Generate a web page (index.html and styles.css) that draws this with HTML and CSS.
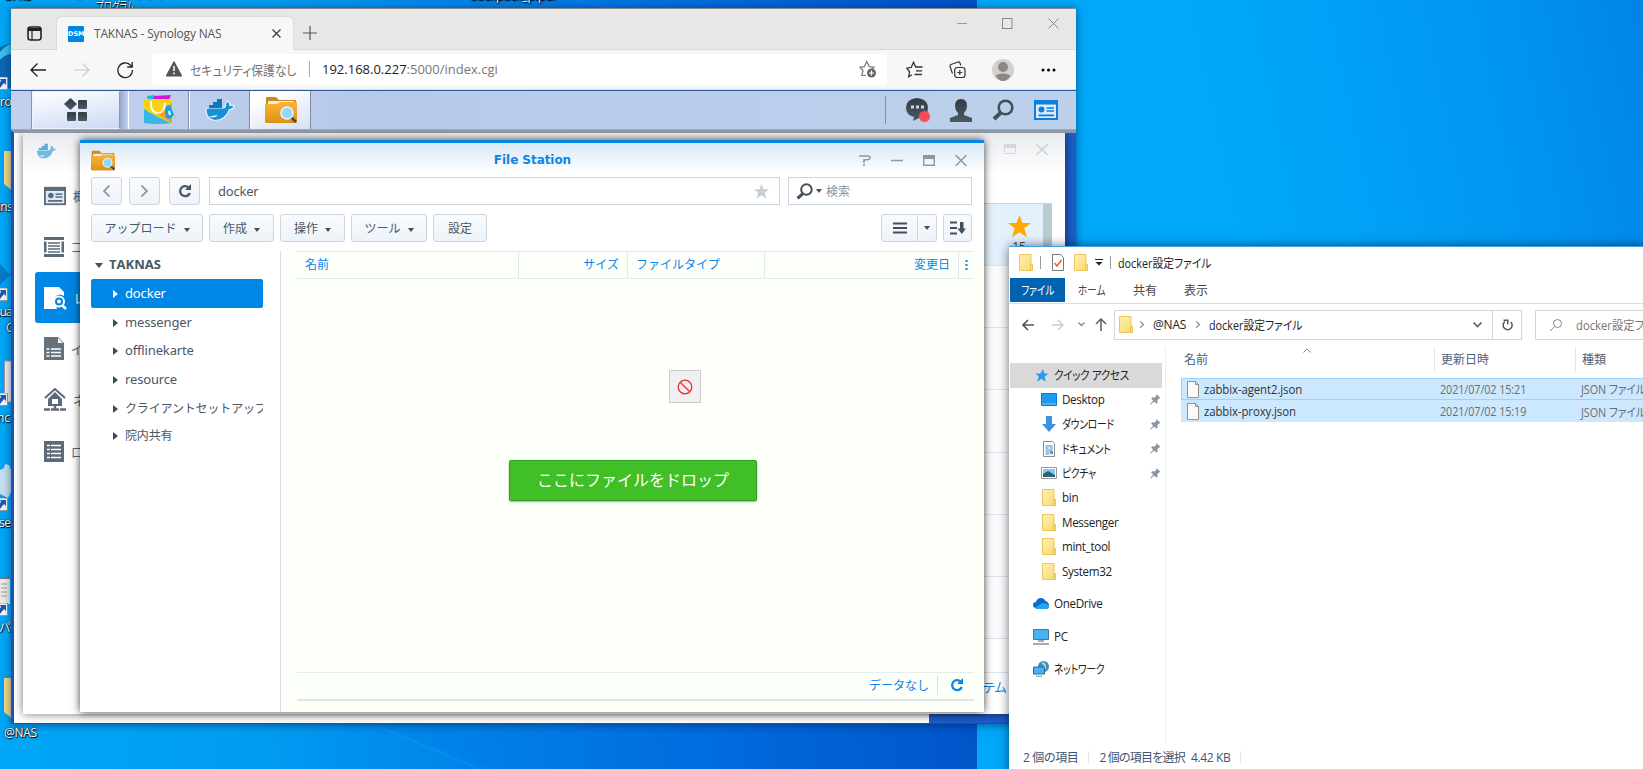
FILE: index.html
```html
<!DOCTYPE html>
<html lang="ja">
<head>
<meta charset="utf-8">
<title>Desktop</title>
<link rel="stylesheet" href="styles.css">
</head>
<body>
<svg class="defs" width="0" height="0">
  <defs>
    <linearGradient id="gFolder" x1="0" y1="0" x2="1" y2="1"><stop offset="0" stop-color="#fff0ae"/><stop offset="1" stop-color="#f8d874"/></linearGradient>
    <linearGradient id="gOrange" x1="0" y1="0" x2="0" y2="1"><stop offset="0" stop-color="#fbb53a"/><stop offset="1" stop-color="#dc9116"/></linearGradient>
    <linearGradient id="gDark" x1="0" y1="0" x2="0" y2="1"><stop offset="0" stop-color="#343c45"/><stop offset="1" stop-color="#4d5964"/></linearGradient>
  </defs>
  <symbol id="folder" viewBox="0 0 14 17"><path d="M.5.5H12V11h1.500v5.500H.5z" fill="url(#gFolder)" stroke="#edc95b"/><path d="M11.500 10.500h2v6h-2z" fill="#fbdf80" stroke="#e6bd44" stroke-width=".8"/></symbol>
  <symbol id="fs" viewBox="0 0 32 28"><path d="M1 2q0-1 1-1h9l3 3h16q1 0 1 1v21q0 1-1 1H2q-1 0-1-1z" fill="#c98a1b"/><path d="M3 5h26v4H3z" fill="#f3efe2"/><path d="M0 8h12l3-2h17v20q0 1-1 1H1q-1 0-1-1z" fill="url(#gOrange)"/><path d="M26 21l5 5" stroke="#3e4d59" stroke-width="2.600"/><circle cx="22" cy="17" r="6" fill="#8fd8fb" stroke="#e6f4fb" stroke-width="1.600"/></symbol>
  <symbol id="whale" viewBox="0 0 30 24"><path d="M.8 11.500q1-1.500 3-1.500h15q2.500-1 1.500-4l2.200-3q2.800 2 2.500 4.500 2-.8 4.300.5-1.300 3.500-4.800 3.500Q20.500 22.500 10 22.500 1.500 21.500.8 11.500z" fill="#1890d8" stroke="#e9f4fc" stroke-width="1.200"/><path d="M4 10V7h4V4h4V1h5v9z" fill="#0e78bd"/><path d="M4 18.500q6 2.500 9-1.500-5 .500-9 1.500z" fill="#e9f4fc"/></symbol>
  <symbol id="lens" viewBox="0 0 22 22"><circle cx="13.500" cy="8.500" r="6.800" fill="none" stroke="currentColor" stroke-width="2.600"/><path d="M8.500 14L2 20" stroke="currentColor" stroke-width="4"/></symbol>
  <symbol id="reload" viewBox="0 0 14 14"><path d="M11.800 9A5 5 0 1 1 10.500 3.500" fill="none" stroke="currentColor" stroke-width="2.300"/><path d="M13 0v6H7z" fill="currentColor"/></symbol>
  <symbol id="pin" viewBox="0 0 11 11"><path d="M6.500 0l4 4-1.500.5-1.600 1.700.1 2.300-1.200 1.200L4.200 7.600.5 10.800 0 10.300l3.200-3.700L1.100 4.500l1.200-1.200 2.300.1L6.200 2z" fill="#8996a3"/></symbol>
  <symbol id="shortcut" viewBox="0 0 11 13"><path d="M0 0h10.500v12.500H0z" fill="#f7f7f7" stroke="#999"/><path d="M3 2h6v6L7 6 3 11 0 9l4-5z" fill="#1c5bb5"/></symbol>
  <symbol id="doc" viewBox="0 0 12 17"><path d="M.5.5h8l3 3v13H.5z" fill="#fafafa" stroke="#929292"/><path d="M8.500.5v3h3" fill="none" stroke="#929292"/></symbol>
  <symbol id="card" viewBox="0 0 24 20"><path d="M0 0h24v20H0z" fill="currentColor"/><path d="M2 4.500h20V18H2z" class="paper"/><circle cx="7.500" cy="9.500" r="3" fill="currentColor"/><path d="M12.500 8H20M12.500 11H20M4.500 15.300H20" stroke="currentColor" stroke-width="1.700"/></symbol>
</svg>

<div class="desktop">
  <div class="monitor-one"><svg width="977" height="769"><path d="M370 723L500 769H977V723z" fill="#0074df" opacity=".15"/><path d="M370 723l110 46M575 0l40 9" stroke="#4aa6f2" stroke-width="1.500" opacity=".2"/></svg></div>
  <div class="monitor-two"></div>

  <svg class="desk-art" width="40" height="720">
    <circle cx="11" cy="66" r="22" fill="#0c67b5"/><path d="M0 52q6-7 11-8v10q-7 1-11 6z" fill="#36bfe8"/>
    <path d="M4 151h10v41l-10-8zM4 678h10v42l-10-8z" fill="#f1d889"/>
    <path d="M0 264l10 11-10 10z" fill="#0a79c8"/>
    <path d="M4.500 361h9v41h-9z" fill="#eee" stroke="#999"/><path d="M0 470l4-2 1-4 4 1 2 5v22l-3 6-4-2-4-2z" fill="#c4dff0"/>
    <path d="M0 577h10v27H0z" fill="#eceae6"/><path d="M0 578h11" stroke="#777" stroke-width="2"/><path d="M1 584h6m-6 4h6m-6 4h6m-6 4h6" stroke="#999"/>
    <use href="#shortcut" x="-3" y="77" width="11" height="13"/><use href="#shortcut" x="-3" y="288" width="11" height="13"/><use href="#shortcut" x="-3" y="393" width="11" height="13"/><use href="#shortcut" x="-3" y="498" width="11" height="13"/><use href="#shortcut" x="-3" y="603" width="11" height="13"/>
  </svg>
  <span class="dl dl1">ro</span><span class="dl dl2">ins</span><span class="dl dl3">sua</span><span class="dl dl4">C</span><span class="dl dl5">nc</span><span class="dl dl6">se</span><span class="dl dl7">パ</span><span class="dl dl8">@NAS</span>
  <span class="dl dl9">こインストラクティ</span><span class="dl dl10">プログラム</span><span class="dl dl11">backpack_p.pdf</span><span class="dl dl12">3.4.5</span>

  <section class="edge">
    <header class="tabstrip">
      <svg class="tabmenu" width="15" height="15" viewBox="0 0 15 15"><rect x="1" y="1" width="13" height="13" rx="2.500" fill="none" stroke="#222" stroke-width="1.600"/><path d="M1 3.500h13" stroke="#222" stroke-width="3"/><path d="M5 4v10" stroke="#222" stroke-width="1.200"/></svg>
      <div class="tab">
        <span class="dsm">DSM</span><span class="tabname">TAKNAS - Synology NAS</span>
        <svg class="tabx" width="9" height="9" viewBox="0 0 9 9"><path d="M.5.5l8 8m0-8l-8 8" stroke="#444" stroke-width="1.400"/></svg>
      </div>
      <svg class="plus" width="14" height="14"><path d="M7 0v14M0 7h14" stroke="#555" stroke-width="1.200"/></svg>
      <div class="wincontrols">
        <svg width="10" height="11"><path d="M0 5.500h10" stroke="#999"/></svg>
        <svg width="11" height="11"><rect x=".5" y=".5" width="9.500" height="10" fill="none" stroke="#888"/></svg>
        <svg width="11" height="11"><path d="M.5.5l10 10m0-10l-10 10" stroke="#888"/></svg>
      </div>
    </header>
    <div class="toolbar">
      <svg class="nav1" width="16" height="14" viewBox="0 0 16 14"><path d="M7.500.5L1 7l6.500 6.500M1 7h15" fill="none" stroke="#222" stroke-width="1.300"/></svg>
      <svg class="nav2" width="16" height="14" viewBox="0 0 16 14"><path d="M8.500.5L15 7l-6.500 6.500M15 7H0" fill="none" stroke="#ccc" stroke-width="1.200"/></svg>
      <svg class="nav3" width="17" height="18" viewBox="0 0 17 18"><path d="M15.500 9A7.300 7.300 0 1 1 13.300 4L15 5.500M15.200 1v5h-5" fill="none" stroke="#222" stroke-width="1.300"/></svg>
      <div class="url">
        <svg class="warn" width="16" height="16" viewBox="0 0 16 16"><path d="M8 .5L15.800 15H.2z" fill="#555" stroke="#555" stroke-linejoin="round"/><path d="M8 5v5M8 11.500v1.700" stroke="#fff" stroke-width="1.500"/></svg>
        <span class="insecure">セキュリティ保護なし</span><i></i><span class="address"><b>192.168.0.227</b>:5000/index.cgi</span>
        <svg class="favadd" width="18" height="18" viewBox="0 0 18 18"><path d="M7 15.500H2.800L4 10.500.8 7.300l4.500-.6L7.800 1.500l2.500 5.200 4.700.5-2.200 2" fill="none" stroke="#767676" stroke-width="1.200"/><circle cx="12.500" cy="13" r="4.500" fill="#666"/><path d="M12.500 10.500v5M10 13h5" stroke="#fff" stroke-width="1.200"/></svg>
      </div>
      <svg class="fav" width="17" height="17" viewBox="0 0 17 17"><path d="M6 13.700l-3.300 2 .9-4.900L.7 7.200l4.500-.7L7.500 1.300 9.800 6h6.700M10 9.800h6M8.500 13.500h7.500" fill="none" stroke="#333" stroke-width="1.300"/></svg>
      <svg class="coll" width="17" height="18" viewBox="0 0 17 18"><rect x="5.700" y="6.500" width="10.300" height="10" rx="2.500" fill="none" stroke="#333" stroke-width="1.200"/><path d="M10.800 9v5M8.300 11.500h5M3.500 12.500L1 5.500Q.7 4 2 3.500L9 1q1.500-.3 2 1l.8 2.500" fill="none" stroke="#333" stroke-width="1.200"/></svg>
      <svg class="avatar" width="22" height="22" viewBox="0 0 22 22"><circle cx="11" cy="11" r="11" fill="#d3d0cd"/><circle cx="11" cy="8" r="5" fill="#8b8784"/><path d="M3.500 17q2-2.500 7.500-2.500t7.500 2.500Q15 22 11 22t-7.500-5z" fill="#8b8784"/></svg>
      <svg class="dots" width="15" height="4"><circle cx="2" cy="2" r="1.500"/><circle cx="7.500" cy="2" r="1.500"/><circle cx="13" cy="2" r="1.500"/></svg>
    </div>

    <nav class="dsmbar">
      <div class="gap1"></div>
      <div class="mainmenu"><svg width="24" height="24" viewBox="0 0 24 24" fill="url(#gDark)"><path d="M6.500 0L13 6 6.500 12 0 6z"/><rect x="14" y="2" width="9" height="9" rx="1"/><rect x="3" y="14" width="9" height="9" rx="1"/><rect x="14" y="14" width="9" height="9" rx="1"/></svg></div>
      <div class="gap2"></div>
      <div class="task"><svg width="32" height="32" viewBox="0 0 32 32"><path d="M10 2l18-1-2 5H8z" fill="#d716d5"/><path d="M4 2l8-1-3 6H5z" fill="#16bce0"/><path d="M1 5h28v24q-14 2-28 0z" fill="#f8cf19"/><path d="M1 15q9 6 27 14-13 2-27 0z" fill="#39b6e9"/><path d="M14 20l15-11v20z" fill="#f7a01b"/><path d="M8 7q-1 11 6 12t8-10" fill="none" stroke="#fffae0" stroke-width="2"/><path d="M23 12l4-1 4 10-4 4-4-1-1-6z" fill="#16a3df"/><path d="M26 17l1 4" stroke="#fff" stroke-width="2"/></svg></div>
      <div class="task"><svg width="30" height="24"><use href="#whale"/></svg></div>
      <div class="task active"><svg width="32" height="28"><use href="#fs"/></svg></div>
      <div class="tray">
        <svg width="24" height="25" viewBox="0 0 24 25"><path d="M11 0q11 1 11 10 0 8-9 10l-6 3 1-4Q0 17 0 10 0 1 11 0z" fill="url(#gDark)"/><path d="M5 9h3M10 9h3M15 9h3" stroke="#c9d6ef" stroke-width="3"/><circle cx="18.500" cy="18.500" r="5.500" fill="#fb4b4f"/></svg>
        <svg width="22" height="23" viewBox="0 0 22 23"><path d="M11 0q6 0 6 7 0 4-3 7v2l8 3v4H0v-4l8-3v-2Q5 11 5 7q0-7 6-7z" fill="url(#gDark)"/></svg>
        <svg class="dk" width="22" height="22"><use href="#lens"/></svg>
        <svg class="blue" width="24" height="20"><use href="#card"/></svg>
      </div>
    </nav>

    <div class="page">
      <div class="docker">
        <aside class="dockernav">
          <svg class="dwhale" width="21" height="17"><use href="#whale"/></svg>
          <div class="ditem"><svg width="22" height="20"><use href="#card"/></svg><span>概要</span></div>
          <div class="ditem"><svg width="20" height="20" viewBox="0 0 20 20"><path d="M0 0h20v3H0zM0 17h20v3H0zM0 4.500h2.500v11H0zM17.500 4.500H20v11h-2.500z" fill="#5d6b78"/><path d="M4 6h12M4 9h12M4 12h12M4 15h12" stroke="#5d6b78" stroke-width="1.500"/></svg><span>コ</span></div>
          <div class="ditem on"><svg width="23" height="24" viewBox="0 0 23 24"><path d="M0 1h15l5 5v4q-4-3-8 0-4 5 0 10l1 3H0z" fill="#fff"/><circle cx="15" cy="15.500" r="5" fill="#0086e5" stroke="#fff" stroke-width="2"/><circle cx="15" cy="15.500" r="2" fill="#fff"/><path d="M18 19l4 4" stroke="#fff" stroke-width="2.500"/></svg><span>レ</span></div>
          <div class="ditem"><svg width="20" height="23" viewBox="0 0 20 23"><path d="M0 0h14l6 6v17H0z" fill="#65727e"/><path d="M14 1v5h5z" fill="#fff"/><path d="M2.500 12h3m1.500 0h10M2.500 15.500h3m1.500 0h10M2.500 19h3m1.500 0h10" stroke="#fff" stroke-width="1.700"/></svg><span>イ</span></div>
          <div class="ditem"><svg width="22" height="23" viewBox="0 0 22 23"><path d="M1 10L11 1l10 9" fill="none" stroke="#5d6b78" stroke-width="2"/><path d="M11 4l7 7v7H4v-7z" fill="#5d6b78"/><path d="M8 11h6v5H8z" fill="#fff"/><path d="M11 18v3M0 21.500h6m1 0h8m1 0h6" stroke="#5d6b78" stroke-width="2.500"/></svg><span>ネ</span></div>
          <div class="ditem"><svg width="20" height="21" viewBox="0 0 20 21"><path d="M0 0h20v21H0z" fill="#5d6b78"/><path d="M3 4.500h3m1 0h10M3 8.500h3m1 0h10M3 12.500h3m1 0h10M3 16.500h3m1 0h10" stroke="#fff" stroke-width="1.700"/></svg><span>ロ</span></div>
        </aside>
        <div class="dockerlist">
          <div class="dctl"><svg width="12" height="10"><path d="M.5.500h11v9H.5z" fill="none" stroke="#d5d9dd"/><path d="M0 2h12" stroke="#d5d9dd" stroke-width="4"/></svg><svg width="12" height="11"><path d="M0 0l12 11M12 0L0 11" stroke="#cdd2d6" stroke-width="1.500"/></svg></div>
          <div class="drow first"><div class="starcol"><svg width="23" height="23" viewBox="0 0 23 23"><path d="M11.500 0l3 8H23l-6.700 5.300L19 22.500l-7.500-5.300L4 22.500l2.700-9.200L0 8h8.500z" fill="#ffa800"/></svg><span>15</span></div><div class="scroll"></div></div>
          <div class="drow"></div><div class="drow"></div><div class="drow"></div><div class="drow"></div><div class="drow"></div><div class="drow"></div><div class="drow short"></div>
          <div class="dfoot">テム</div>
        </div>
      </div>

      <section class="station">
        <header class="stitle"><svg width="24" height="21"><use href="#fs"/></svg><h1>File Station</h1>
          <div class="sctl">
            <svg width="12" height="11" viewBox="0 0 12 11"><path d="M0 1h9.500q1.500 0 1.500 1.500T9.500 4.500L5 5v3M5 9v2" fill="none" stroke="#8d98a3" stroke-width="1.600"/></svg>
            <svg width="12" height="11"><path d="M0 5.500h12" stroke="#8d98a3" stroke-width="1.500"/></svg>
            <svg width="12" height="11"><path d="M.7.700h10.600v9.600H.7z" fill="none" stroke="#8d98a3" stroke-width="1.400"/><path d="M0 2h12" stroke="#8d98a3" stroke-width="4"/></svg>
            <svg width="12" height="11"><path d="M.5 0l11 11M11.500 0L.5 11" stroke="#8d98a3" stroke-width="1.500"/></svg>
          </div>
        </header>
        <div class="srow path">
          <button class="sb"><svg width="7" height="12"><path d="M6.500.5L1 6l5.500 5.500" fill="none" stroke="#8c98a5" stroke-width="1.800"/></svg></button>
          <button class="sb"><svg width="7" height="12"><path d="M.5.500L6 6 .5 11.500" fill="none" stroke="#8c98a5" stroke-width="1.800"/></svg></button>
          <button class="sb rl"><svg width="14" height="14"><use href="#reload"/></svg></button>
          <div class="pathbox"><span>docker</span><svg width="15" height="15" viewBox="0 0 23 23"><path d="M11.500 0l3 8H23l-6.700 5.300L19 22.500l-7.500-5.300L4 22.500l2.700-9.200L0 8h8.500z" fill="#c4cfda"/></svg></div>
          <div class="sfind"><svg class="dk" width="17" height="17"><use href="#lens"/></svg><i class="caret"></i><span>検索</span></div>
        </div>
        <div class="srow actions">
          <button class="sb w1"><span>アップロード</span><i class="caret"></i></button>
          <button class="sb w2"><span>作成</span><i class="caret"></i></button>
          <button class="sb w2"><span>操作</span><i class="caret"></i></button>
          <button class="sb w3"><span>ツール</span><i class="caret"></i></button>
          <button class="sb w4"><span>設定</span></button>
          <div class="viewgrp"><button><svg width="14" height="12"><path d="M0 1.500h14M0 6h14M0 10.500h14" stroke="#444f5a" stroke-width="2"/></svg></button><button><i class="caret"></i></button></div>
          <button class="sb w5"><svg width="16" height="14" viewBox="0 0 16 14"><path d="M0 1.500h7M0 7h7M0 12.500h7" stroke="#444f5a" stroke-width="2.200"/><path d="M10 1h3.500v6.500H16L11.800 13 7.500 7.500H10z" fill="#444f5a"/></svg></button>
        </div>
        <div class="sbody">
          <aside class="tree">
            <div class="root"><i class="caret"></i>TAKNAS</div>
            <div class="node sel"><i></i>docker</div><div class="node"><i></i>messenger</div><div class="node"><i></i>offlinekarte</div><div class="node"><i></i>resource</div><div class="node"><i></i><span class="cs">クライアントセットアップ</span></div><div class="node"><i></i>院内共有</div>
          </aside>
          <main class="grid">
            <div class="ghead"><span>名前</span><span class="r">サイズ</span><span>ファイルタイプ</span><span class="r">変更日</span><span class="more"><svg width="3" height="10"><path d="M1.500 0v2m0 2v2m0 2v2" stroke="#0086e5" stroke-width="2"/></svg></span></div>
            <div class="gempty"></div>
            <div class="gfoot"><span>データなし</span><i></i><svg width="14" height="14"><use href="#reload"/></svg></div>
          </main>
        </div>
        <div class="nodrop"><svg width="16" height="16"><circle cx="8" cy="8" r="6.800" fill="none" stroke="#ee2d37" stroke-width="1.300"/><path d="M3.200 3.200l9.600 9.600" stroke="#ee2d37" stroke-width="1.300"/></svg></div>
        <div class="drop">ここにファイルをドロップ</div>
      </section>
    </div>
  </section>

  <section class="explorer">
    <header class="xtitle"><svg width="14" height="17"><use href="#folder"/></svg><i></i><svg width="12" height="17" viewBox="0 0 12 17"><path d="M.5.500h8l3 3v13H.5z" fill="#fff" stroke="#777"/><path d="M2.500 9l2.500 3 4.500-6" fill="none" stroke="#f0642b" stroke-width="1.600"/></svg><svg width="14" height="17"><use href="#folder"/></svg><svg class="qa" width="8" height="7"><path d="M0 .5h8" stroke="#222"/><path d="M.5 3h7L4 6.500z" fill="#222"/></svg><i></i><span class="xname">docker設定ファイル</span></header>
    <nav class="ribbon"><b><u>ファイル</u></b><span><u>ホーム</u></span><span>共有</span><span>表示</span></nav>
    <div class="xaddr">
      <svg class="a1" width="12" height="12"><path d="M6 1L1 6l5 5M1 6h11" fill="none" stroke="#555" stroke-width="1.600"/></svg>
      <svg class="a2" width="12" height="12"><path d="M6 1l5 5-5 5M11 6H0" fill="none" stroke="#ccc" stroke-width="1.500"/></svg>
      <svg class="a3" width="7" height="5"><path d="M.5.500l3 3 3-3" fill="none" stroke="#888" stroke-width="1.400"/></svg>
      <svg class="a4" width="12" height="13"><path d="M1 6l5-5 5 5M6 1v12" fill="none" stroke="#666" stroke-width="1.600"/></svg>
      <div class="xpath"><svg width="14" height="17"><use href="#folder"/></svg><em></em><span class="nas">@NAS</span><em></em><span class="xp">docker設定ファイル</span><svg class="chev" width="9" height="6"><path d="M.5.500l4 4 4-4" fill="none" stroke="#666" stroke-width="1.700"/></svg><div class="xrel"><svg width="11" height="12" viewBox="0 0 11 12"><path d="M8.800 3A4.500 4.500 0 1 1 3 2.600M1.500 1.200h4.300v4" fill="none" stroke="#555" stroke-width="1.500"/></svg></div></div>
      <div class="xfind"><svg width="12" height="12"><circle cx="7.500" cy="4.500" r="4" fill="none" stroke="#888"/><path d="M4.500 7.500L0 12" stroke="#888"/></svg><span>docker設定ファイルの検索</span></div>
    </div>
    <div class="xbody">
      <aside class="xnav">
        <div class="q"><svg width="14" height="13" viewBox="0 0 23 23"><path d="M13.500 0l2 8H23l-6.700 5.300L18 22.500l-7.500-5.300L3 22.500l2.700-9.200L0 8h8.500z" fill="#2c9be6"/></svg><span class="k2">クイック アクセス</span></div>
        <div class="sub"><svg width="16" height="13"><path d="M.5.500h15v12H.5z" fill="#1f9bf0" stroke="#1479bf"/><path d="M1 11h14" stroke="#78c8f8"/></svg><span>Desktop</span><svg class="p" width="11" height="11"><use href="#pin"/></svg></div>
        <div class="sub"><svg width="16" height="16"><path d="M5 0h6v8h4l-7 8-7-8h4z" fill="#3b93df"/></svg><span class="k">ダウンロード</span><svg class="p" width="11" height="11"><use href="#pin"/></svg></div>
        <div class="sub"><svg width="16" height="16" viewBox="0 0 16 16"><path d="M2.500.500h9l2 2v13h-11z" fill="#fff" stroke="#8d8d8d"/><path d="M4.500 5h7M4.500 7h3M9 7h3M4.500 9h7M4.500 11h4M4.500 13h4" stroke="#2c8ad0"/><path d="M9 10h3v3H9z" fill="#569bc1"/></svg><span class="k">ドキュメント</span><svg class="p" width="11" height="11"><use href="#pin"/></svg></div>
        <div class="sub"><svg width="16" height="12"><path d="M.5.500h15v11H.5z" fill="#fff" stroke="#999"/><path d="M2 2h12v8H2z" fill="#88c9ef"/><path d="M2 7l5-3 7 4v2H2z" fill="#2c6477"/></svg><span class="k">ピクチャ</span><svg class="p" width="11" height="11"><use href="#pin"/></svg></div>
        <div class="sub"><svg width="16" height="17"><use href="#folder"/></svg><span>bin</span></div>
        <div class="sub"><svg width="16" height="17"><use href="#folder"/></svg><span>Messenger</span></div>
        <div class="sub"><svg width="16" height="17"><use href="#folder"/></svg><span>mint_tool</span></div>
        <div class="sub"><svg width="16" height="17"><use href="#folder"/></svg><span>System32</span></div>
        <div class="top"><svg width="16" height="11"><path d="M3 10Q0 10 0 7t3-3q1-4 5-4 3 0 4.500 3Q16 4 16 7.500T13 11H3z" fill="#0b6cc6"/><path d="M2 10l7-5 4 .5q3 1 3 3T13 11H4z" fill="#27a5ee"/></svg><span>OneDrive</span></div>
        <div class="top"><svg width="16" height="16"><path d="M.5.500h15v10H.5z" fill="#45b4f3" stroke="#52748c"/><path d="M5 12h6M0 15h16" stroke="#8193a3" stroke-width="1.500"/></svg><span>PC</span></div>
        <div class="top"><svg width="16" height="16"><circle cx="10.500" cy="5.500" r="5.500" fill="#4490b4"/><path d="M9 2q4 1 3 6" stroke="#a8d7e6" fill="none" stroke-width="2"/><path d="M.5 6h11v7H.5z" fill="#43b4f1" stroke="#2b6f95"/><path d="M3 15.200h6" stroke="#789"/></svg><span class="k">ネットワーク</span></div>
      </aside>
      <main class="files">
        <svg class="sort" width="8" height="5"><path d="M.5 4.500L4 1l3.500 3.500" fill="none" stroke="#888"/></svg>
        <div class="fh"><span>名前</span><span>更新日時</span><span>種類</span></div>
        <div class="f focus"><span><svg width="12" height="17"><use href="#doc"/></svg><u>zabbix-agent2.json</u></span><span><u>2021/07/02 15:21</u></span><span><u>JSON ファイル</u></span></div>
        <div class="f"><span><svg width="12" height="17"><use href="#doc"/></svg><u>zabbix-proxy.json</u></span><span><u>2021/07/02 15:19</u></span><span><u>JSON ファイル</u></span></div>
      </main>
    </div>
    <footer class="status"><span class="s1">2 個の項目</span><i></i><span class="s2">2 個の項目を選択</span><span>4.42 KB</span><i></i></footer>
  </section>
</div>
</body>
</html>
```
FILE: styles.css
```css
* { box-sizing: border-box; }
body { margin: 0; overflow: hidden; font-family: "Open Sans", "Noto Sans CJK JP", sans-serif; font-feature-settings: "palt"; font-size: 12px; white-space: nowrap; }
.defs { position: absolute; }
svg { display: block; flex: none; }
button { font: inherit; color: inherit; padding: 0; margin: 0; }
i, em, u { font-style: normal; text-decoration: none; }

.desktop { position: relative; width: 1643px; height: 769px; overflow: hidden; display: flex; }
.monitor-one { width: 977px; background: linear-gradient(90deg, #00a6f6 0, #009df2 250px, #0080e8 500px, #0068dc 740px, #0050c5 977px); }
.monitor-two { flex: 1; background: linear-gradient(78deg, #00a8f8 0 45%, #009ff6 65%, #0093ef 84%, #0084e6 100%); }
.desk-art { position: absolute; left: 0; top: 0; }
.dl { position: absolute; color: #fff; font-size: 12px; line-height: 16px; text-shadow: 1px 1px 1px #000, 0 0 2px #000; }
.dl1 { left: 0; top: 94px; letter-spacing: -.5px; }
.dl2 { left: -2px; top: 199px; letter-spacing: -.7px; }
.dl3 { left: -5px; top: 304px; letter-spacing: -1px; }
.dl4 { left: 6px; top: 320px; }
.dl5 { left: -3px; top: 410px; }
.dl6 { left: -1px; top: 515px; letter-spacing: -.5px; }
.dl7 { left: -1px; top: 620px; }
.dl8 { left: 4px; top: 725px; letter-spacing: -.3px; }
.dl9 { left: 73px; top: -13px; } .dl10 { left: 96px; top: -1px; transform: scaleX(.7); transform-origin: 0 0; }
.dl11 { left: 470px; top: -12px; } .dl12 { left: 5px; top: -12px; }

/* Browser window */
.edge { position: absolute; left: 11px; top: 8px; width: 1065px; height: 716px; display: flex; flex-direction: column; box-shadow: 0 1px 8px rgba(0,20,60,.55); }
.tabstrip { height: 42px; background: #e7e7e7; border-top: 1px solid #888; border-bottom: 1px solid #d9d9d9; display: flex; position: relative; }
.tabmenu { margin: 17px 0 0 16px; }
.tab { width: 236px; margin: 8px 0 -1px 15px; background: #f7f7f7; border-radius: 5px 5px 0 0; box-shadow: 0 0 2px #bbb; clip-path: inset(-3px -3px 0 -3px); display: flex; align-items: center; padding: 0 12px 0 11px; }
.dsm { width: 16px; height: 16px; background: #0086e5; border-radius: 1px; color: #fff; font: bold 6.500px/16px "DejaVu Sans", sans-serif; text-align: center; }
.tabname { margin-left: 10px; color: #555; font-size: 12px; letter-spacing: -.18px; }
.tabx { margin-left: auto; }
.plus { margin: 17px 0 0 10px; }
.wincontrols { margin-left: auto; display: flex; gap: 35px; padding: 9px 17px 0 0; }
.toolbar { height: 40px; background: #f7f7f7; display: flex; align-items: center; padding-left: 19px; border-bottom: 1px solid #ddd; }
.nav2 { margin-left: 28px; } .nav3 { margin-left: 27px; }
.url { margin-left: 18px; width: 735px; height: 31px; background: #fff; border-radius: 4px; display: flex; align-items: center; padding: 0 10px 1px 14px; }
.insecure { margin-left: 8px; font-size: 13px; color: #737373; width: 107px; transform: scaleX(.91); transform-origin: 0 50%; }
.url i { width: 1px; height: 16px; background: #aaa; margin: 0 12px 0 12px; }
.address { color: #777; font-size: 13px; } .address b { font-weight: 400; color: #222; }
.favadd { margin-left: auto; } .fav { margin-left: 19px; } .coll { margin-left: 26px; } .avatar { margin-left: 26px; } .dots { margin-left: 27px; }

.dsmbar { height: 40px; border-top: 1px solid #2f5799; background: linear-gradient(90deg, #c2d0ee 0, #b8caea 350px, #bcd0eb); display: flex; border-bottom: 1px solid #9cabc4; }
.gap1 { width: 21px; border-right: 1px solid #8797b5; }
.mainmenu { width: 88px; background: linear-gradient(170deg, #fff, #ccd9f4); border: 1px solid #edf2fc; border-right-color: #8c99b1; display: flex; align-items: center; justify-content: center; }
.gap2 { width: 8px; background: linear-gradient(90deg, #97a9cf, #c2d1ef); }
.task { width: 61px; border-left: 1px solid #fff; border-right: 1px solid #7d8aa0; display: flex; align-items: center; justify-content: center; }
.task.active { background: linear-gradient(160deg, #fff 20%, #d6e0f6); }
.tray { margin: 5px 18px 5px auto; border-left: 1px solid #7f8fa9; padding-left: 20px; display: flex; align-items: center; gap: 20px; }
.dk { color: #444f5a; } .blue { color: #0b7fdd; } .paper { fill: #dceafa; }

.page { position: relative; flex: 1; border: solid #1e52b0; border-width: 3px 0 1px 3px; border-top-color: #8e98a6; background: linear-gradient(90deg, #fff 915px, #1e5cc8 915px); }
.docker { height: 581px; margin-left: 9px; width: 1042px; background: linear-gradient(#e8eaec 0, #fff 40px); box-shadow: 0 0 9px rgba(0,0,0,.55); display: flex; justify-content: space-between; clip-path: inset(0 -10px -10px -10px); }
.dockernav { width: 100px; padding: 10px 0 0 12px; }
.dwhale { opacity: .6; margin: 0 0 10px 1px; }
.ditem { height: 51.100px; display: flex; align-items: center; padding-left: 9px; color: #5d6b78; font-size: 13px; }
.ditem svg { margin-right: 7px; } .ditem .paper { fill: #fff; }
.ditem.on { background: #0086e5; color: #fff; border-radius: 3px; }
.dockerlist { width: 105px; padding-left: 20px; }
.dctl { height: 70px; display: flex; gap: 20px; padding: 11px 0 0 24px; }
.drow { border-bottom: 1px solid #dde6ee; height: 62.200px; width: 72px; background: #fcfcfc; }
.drow.first { background: #e3f1fd; border-top: 1px solid #c7d7e4; height: 63px; display: flex; justify-content: flex-end; }
.starcol { width: 46px; display: flex; flex-direction: column; align-items: center; padding-top: 11px; margin-right: -4px; color: #444; }
.starcol span { line-height: 18px; }
.scroll { width: 9px; background: #bccad4; margin-left: 5px; }
.drow.short { height: 34px; background: none; border-bottom: 1px solid #dde6ee; }
.dfoot { color: #0c86e8; font-size: 13px; padding: 4px 0 0 3px; }

/* File Station */
.station { position: absolute; left: 66px; top: 7px; width: 904px; height: 572px; background: #fff; border-top: 3px solid #0086e5; box-shadow: 0 0 8px rgba(0,0,0,.75); display: flex; flex-direction: column; color: #4b5763; font-size: 13px; font-family: "Noto Sans", "Noto Sans CJK JP", sans-serif; }
.stitle { height: 34px; background: linear-gradient(#d7e8f7, #fff 30px); display: flex; align-items: center; padding: 0 17px 0 11px; position: relative; }
.stitle h1 { flex: 1; text-align: center; font: bold 12px "DejaVu Sans", sans-serif; color: #0f84e5; margin: 0 -6px 0 85px; letter-spacing: -.05px; }
.sctl { display: flex; gap: 20px; }
.srow { display: flex; padding: 0 12px 0 11px; height: 28px; }
.path { gap: 7px; margin-bottom: 9px; }
.sb, .viewgrp { border: 1px solid #ccd5de; border-radius: 3px; background: linear-gradient(#f9fbfd, #edf3f9); display: flex; align-items: center; justify-content: center; height: 28px; }
.path .sb { width: 31px; } .path .rl { margin-left: 2px; }
.pathbox { width: 571px; margin-left: 2px; border: 1px solid #ccd5de; display: flex; align-items: center; justify-content: space-between; padding: 0 10px 0 8px; letter-spacing: -.2px; }
.sfind { flex: 1; margin-left: 1px; border: 1px solid #ccd5de; display: flex; align-items: center; padding-left: 7px; color: #8a95a1; font-size: 12px; }
.caret { border: 3px solid transparent; border-top: 4px solid #444f5a; border-bottom: 0; display: inline-block; }
.sfind .caret { margin: 0 4px 0 3px; }
.actions { gap: 6px; font-size: 12px; font-feature-settings: normal; }
.actions .sb .caret { margin: 3px 0 0 7px; }
.w1 { width: 112px; } .w2 { width: 65px; } .w3 { width: 76px; } .w4 { width: 54px; } .w5 { width: 29px; }
.viewgrp { margin-left: auto; width: 56px; }
.viewgrp button { border: 0; background: none; height: 26px; width: 36px; display: flex; align-items: center; justify-content: center; }
.viewgrp button + button { width: 19px; border-left: 1px solid #ccd5de; }
.sbody { flex: 1; display: flex; margin-top: 9px; }
.tree { width: 201px; padding: 0 17px 0 11px; border-right: 1px solid #d8dde2; }
.root { font-weight: 700; height: 28px; line-height: 27px; font-family: "Open Sans", sans-serif; }
.root .caret { border-width: 5px 4px 0 4px; margin: 0 6px 1px 4px; }
.node { height: 28.700px; line-height: 28px; padding-left: 22px; overflow: hidden; border-radius: 2px; letter-spacing: -.15px; }
.node > i { display: inline-block; border: 4px solid transparent; border-left: 5px solid #3d4955; border-right: 0; margin-right: 7px; }
.node .cs { font-size: 12px; font-feature-settings: normal; } .node:last-child { font-size: 12px; }
.node.sel { background: #0086e5; color: #fff; } .node.sel i { border-left-color: #fff; }
.grid { flex: 1; background: #fdfff9; display: flex; flex-direction: column; padding: 0 10px 11px 16px; font-feature-settings: normal; }
.ghead { height: 28px; border: 1px solid #e0ebef; border-width: 1px 0; display: grid; grid-template-columns: 222px 109px 137px 194px 1fr; color: #0c86e8; font-size: 12px; line-height: 26px; }
.ghead span { border-right: 1px solid #dfe9ee; padding: 0 8px 0 8px; } .ghead .r { text-align: right; }
.ghead .more { border: 0; padding: 8px 0 0 6px; }
.gempty { flex: 1; }
.gfoot { height: 29px; border-top: 1px solid #e0eeee; border-bottom: 2px solid #dfe7eb; display: flex; align-items: center; justify-content: flex-end; color: #0c86e8; padding: 0 10px 2px 0; font-size: 12px; }
.gfoot i { width: 1px; height: 19px; background: #d5e0e6; margin: 0 12px 0 8px; }
.nodrop { position: absolute; left: 589px; top: 227px; width: 32px; height: 33px; background: #f0f0f2; border: 1px solid #ccc; display: flex; align-items: center; justify-content: center; }
.drop { position: absolute; left: 429px; top: 317px; width: 248px; height: 41px; border: 1px solid #27a317; border-radius: 2px; background: #41bf26; color: #fff; font-size: 16px; font-feature-settings: normal; line-height: 39px; text-align: center; box-shadow: 0 1px 2px rgba(0,0,0,.35); }

/* Explorer window */
.explorer { position: absolute; left: 1009px; top: 246px; width: 660px; height: 530px; background: #fff; border-top: 1px solid #47a0db; box-shadow: 0 0 10px rgba(0,20,50,.6); color: #222; font-size: 12px; display: flex; flex-direction: column; }
.xtitle { height: 31px; display: flex; align-items: center; padding-left: 10px; }
.xtitle i { width: 1px; height: 13px; background: #999; margin: 0 11px 0 7px; }
.xtitle svg + svg { margin-left: 10px; } .xtitle .qa { margin: 0 0 0 7px !important; } .xtitle .qa + i { margin-right: 7px; }
.xname, .xp { transform: scaleX(.9); transform-origin: 0 50%; }
.ribbon { height: 26px; border-bottom: 1px solid #ddd; display: flex; line-height: 25px; padding-left: 1px; color: #444; }
.ribbon u { display: inline-block; transform: scaleX(.8); }
.ribbon b { background: #0063b1; color: #fff; font-weight: 400; width: 55px; height: 24px; text-align: center; }
.ribbon span { margin-left: 13px; width: 42px; } .ribbon span + span { width: 38px; }
.ribbon span u { transform-origin: 0 50%; }
.xaddr { height: 41px; display: flex; align-items: center; padding-left: 13px; margin-bottom: 2px; }
.a2 { margin-left: 18px; } .a3 { margin-left: 14px; } .a4 { margin-left: 10px; }
.xpath { width: 408px; height: 30px; border: 1px solid #d5d5d5; display: flex; align-items: center; padding-left: 4px; margin-left: 7px; }
.xpath em { width: 5px; height: 5px; border: solid #777; border-width: 1px 1px 0 0; transform: rotate(45deg); margin: 0 10px 0 5px; }
.xpath .nas { width: 33px; letter-spacing: -.2px; } .xpath .nas + em { margin: 0 10px 0 8px; }
.chev { margin-left: auto; } .xrel { width: 29px; height: 28px; border-left: 1px solid #d5d5d5; margin-left: 10px; display: flex; align-items: center; justify-content: center; }
.xfind { margin-left: 13px; flex: 1; height: 30px; border: 1px solid #d5d5d5; display: flex; align-items: center; gap: 14px; padding-left: 14px; color: #767676; overflow: hidden; }
.xfind span { transform: scaleX(.94); transform-origin: 0 50%; }
.xbody { height: 398px; display: flex; }
.xnav { width: 157px; height: 398px; border-right: 1px solid #efefef; padding: 16px 1px 0 1px; letter-spacing: -.35px; }
.xnav > div { display: flex; align-items: center; height: 24.500px; }
.xnav span { transform: scaleX(.97); transform-origin: 0 50%; }
.xnav .k { transform: scaleX(.82); } .xnav .k2 { transform: scaleX(.88); }
.xnav .q { background: #d9d9d9; padding-left: 25px; gap: 5px; margin-right: 2px; }
.xnav .sub { padding-left: 31px; gap: 5px; } .xnav .p { margin: 0 3px 0 auto; }
.xnav .top { height: 32.700px; padding-left: 23px; gap: 5px; } .xnav .sub + .top { margin-top: 4px; }
.files { position: relative; flex: 1; padding-left: 15px; }
.sort { position: absolute; left: 137px; top: 1px; }
.fh, .f { display: grid; grid-template-columns: 253px 141px 1fr; }
.fh { height: 25px; line-height: 25px; margin-bottom: 6px; color: #4c607a; padding-left: 3px; }
.fh span + span { border-left: 1px solid #e5e5e5; padding-left: 6px; margin-left: -3px; }
.f { height: 22px; align-items: center; background: #cce8ff; border-top: 1px solid #cce8ff; color: #6d6d6d; letter-spacing: -.1px; padding-left: 6px; }
.f.focus { border: 1px solid #99d1ff; padding-left: 5px; }
.f u { display: inline-block; transform: scaleX(.9); transform-origin: 0 50%; }
.f span:first-child { display: flex; align-items: center; gap: 5px; color: #333; }
.f span:first-child u { transform: scaleX(.95); }
.status { display: flex; align-items: center; height: 24px; padding-left: 14px; color: #3f5573; letter-spacing: -.35px; }
.status i { width: 1px; height: 12px; background: #e5e5e5; margin: 0 10px; }
.status .s2 { margin-right: 6px; letter-spacing: -.8px; }
```
